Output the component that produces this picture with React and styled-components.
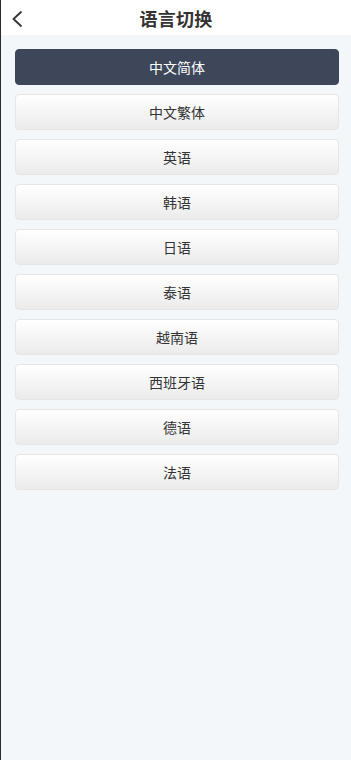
import React, { useState } from "react";
import styled, { createGlobalStyle } from "styled-components";

const GlobalStyle = createGlobalStyle`
  html, body {
    margin: 0;
    padding: 0;
    background: #f4f7fa;
    font-family: "Noto Sans CJK SC", "Noto Sans", sans-serif;
  }
`;

const languages = [
  "中文简体",
  "中文繁体",
  "英语",
  "韩语",
  "日语",
  "泰语",
  "越南语",
  "西班牙语",
  "德语",
  "法语",
];

export default function App() {
  const [current, setCurrent] = useState(0);

  return (
    <Page>
      <GlobalStyle />
      <Header>
        <BackButton aria-label="back">
          <svg width="12" height="16" viewBox="0 0 12 16" fill="none">
            <path d="M10 1L2.5 8L10 15" stroke="#333" strokeWidth="1.8" strokeLinecap="round" strokeLinejoin="round" />
          </svg>
        </BackButton>
        <Title>语言切换</Title>
      </Header>
      <List>
        {languages.map((name, i) => (
          <LangButton key={name} $active={i === current} onClick={() => setCurrent(i)}>
            {name}
          </LangButton>
        ))}
      </List>
    </Page>
  );
}

const Page = styled.div`
  min-height: 760px;
  box-sizing: border-box;
  border-left: 1px solid #2a2a2a;
  background: #f4f7fa;
`;

const Header = styled.div`
  position: relative;
  height: 35px;
  background: #fff;
  display: flex;
  align-items: center;
  justify-content: center;
`;

const BackButton = styled.div`
  position: absolute;
  left: 10px;
  top: 11px;
  display: flex;
`;

const Title = styled.h1`
  margin: 0;
  font-size: 18px;
  font-weight: 700;
  color: #333;
  letter-spacing: 0.2px;
`;

const List = styled.div`
  display: flex;
  flex-direction: column;
  gap: 9px;
  padding: 14px 12px 0 14px;
`;

const LangButton = styled.div`
  height: 36px;
  box-sizing: border-box;
  border-radius: 4px;
  display: flex;
  align-items: center;
  justify-content: center;
  font-size: 14px;
  cursor: pointer;
  color: ${(p) => (p.$active ? "#fff" : "#333")};
  background: ${(p) =>
    p.$active ? "#3d4759" : "linear-gradient(to bottom, #ffffff, #ebebeb)"};
  border: 1px solid ${(p) => (p.$active ? "#3d4759" : "#e6e6e6")};
`;
